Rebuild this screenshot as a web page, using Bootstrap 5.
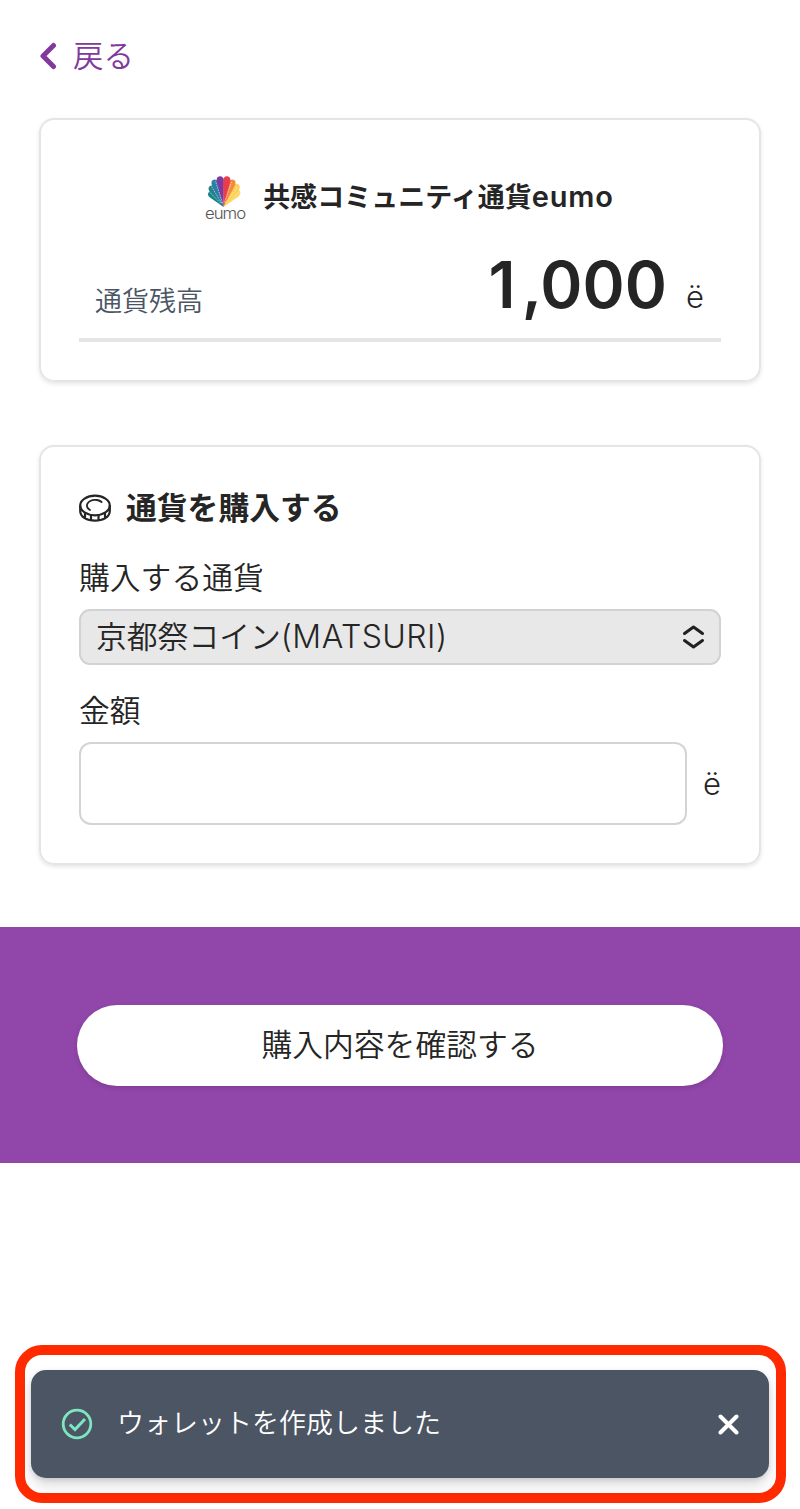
<!DOCTYPE html>
<html lang="ja">
<head>
<meta charset="utf-8">
<meta name="viewport" content="width=device-width, initial-scale=1">
<title>通貨を購入する</title>
<link href="https://cdn.jsdelivr.net/npm/bootstrap@5.3.0/dist/css/bootstrap.min.css" rel="stylesheet">
<style>
body{font-family:Inter,"Noto Sans CJK JP DemiLight","Noto Sans CJK JP",sans-serif;font-weight:350;font-size:30.8px;line-height:46px;color:#252525;background:#fff}
.back-link{color:#81399c;height:118px;padding:0 0 6px 39px;font-size:30.4px;gap:14px}
.panel{margin:0 39px;border:2px solid #e5e5e5;border-radius:15px;box-shadow:0 2px 4px rgba(0,0,0,.1)}
.balance-panel{height:264px;padding:50px 38px 0}
.buy-panel{height:420px;margin-top:63px;padding:38px 38px 0}
.currency-name{font-family:Inter,"Noto Sans CJK JP",sans-serif;font-size:27px;font-weight:600;height:54px;gap:20px;padding:1px 0 0 19px}
.currency-name svg{overflow:visible}
.currency-name .latin{font-size:29px;letter-spacing:.8px}
.balance-row{padding:0 16px;margin-top:25px;height:93px;border-bottom:4px solid #e5e5e5}
.balance-label{font-size:27px;line-height:40px;color:#4b5563;padding-bottom:16px}
.balance-value{font-size:64px;line-height:64px;font-weight:600;padding-bottom:9px}
.balance-value .lead-digit{letter-spacing:6px}
.unit{font-size:31px;font-weight:350}
.balance-value .unit{margin:0 1px 0 3px}
.section-title{font-family:Inter,"Noto Sans CJK JP",sans-serif;font-size:30.8px;line-height:46px;font-weight:700;gap:15px}
.currency-select{height:56px;border:2px solid #d2d2d4;border-radius:11px;background:#e8e8e8;padding:0 14px 0 15px}
.currency-select .latin{font-size:32px;letter-spacing:.45px}
.amount-group{margin-top:23px}
.amount-input{height:83px;border:2px solid #d2d4d6;border-radius:12px}
.action-bar{height:236px;margin-top:62px;background:#9146a9;padding:78px 77px 0}
.confirm-btn{height:81px;border-radius:41px;font-size:30.8px;font-weight:350;background:#fff;color:#252525;box-shadow:0 2px 5px rgba(0,0,0,.12)}
.toast-frame{margin:182px 14px 0 15px;height:158px;border:10px solid #ff2a00;border-radius:27px;padding:15px 7px 0 6px}
.notice{height:108px;border-radius:15px;background:#4b5563;color:#fff;font-size:27px;padding:0 30px 0 30px;box-shadow:0 8px 14px rgba(0,0,0,.13),0 2px 5px rgba(0,0,0,.12)}
</style>
</head>
<body>
<a href="#" class="back-link d-flex align-items-center text-decoration-none">
  <svg width="20" height="28" viewBox="0 0 20 28" fill="none" stroke="currentColor" stroke-width="5" stroke-linecap="round" stroke-linejoin="round"><path d="M14.500 3.500 4 14 14.500 24.500"/></svg>
  <span>戻る</span>
</a>
<main>
  <section class="panel balance-panel">
    <div class="currency-name d-flex align-items-center justify-content-center text-nowrap">
      <svg width="38" height="48" viewBox="0 0 38 48">
        <g transform="translate(18.500 33)">
          <path fill="#18858d" transform="rotate(-43)" d="M0 0-3.600-17Q-3.400-21 0-21T3.600-17Z"/>
          <path fill="#ffd867" transform="rotate(44)" d="M0 0-3.600-18Q-3.400-23 0-23T3.600-18Z"/>
          <path fill="#23808f" transform="rotate(-32)" d="M0 0-3.600-21Q-3.400-25 0-25T3.600-21Z"/>
          <path fill="#ffcf5b" transform="rotate(33)" d="M0 0-3.800-22Q-3.500-27 0-27T3.800-22Z"/>
          <path fill="#2b7ea8" transform="rotate(-20)" d="M0 0-3.400-25Q-3.200-29 0-29T3.400-25Z"/>
          <path fill="#f58a3b" transform="rotate(20)" d="M0 0-3.400-25Q-3.200-29 0-29T3.400-25Z"/>
          <path fill="#7d399f" transform="rotate(-7)" d="M0 0-3.700-27Q-3.200-31 0-31T3.700-27Z"/>
          <path fill="#e83d4c" transform="rotate(7)" d="M0 0-3.700-27Q-3.200-31 0-31T3.700-27Z"/>
          <g stroke="#fff" stroke-width=".9" opacity=".65" stroke-dasharray="1.500 1"><path d="M-3-4-16-17M-2-4-13-22M-1-4-8-26M1-5 8-25M2-4 14-20"/></g>
        </g>
        <text transform="translate(0 45) scale(1.080 1)" font-family="Inter,sans-serif" font-size="15.500" font-weight="300" letter-spacing="-.9" fill="#555">eumo</text>
      </svg>
      <span>共感コミュニティ通貨<span class="latin">eumo</span></span>
    </div>
    <div class="balance-row d-flex align-items-end justify-content-between">
      <span class="balance-label">通貨残高</span>
      <span class="balance-value"><span class="lead-digit">1</span>,000 <span class="unit">ë</span></span>
    </div>
  </section>

  <section class="panel buy-panel">
    <h1 class="section-title d-flex align-items-center mb-4">
      <svg width="32" height="28" viewBox="0 0 32 28" fill="none" stroke="#252525" stroke-width="2.200" stroke-linecap="round"><ellipse cx="16" cy="11.500" rx="14.800" ry="9.800"/><path d="M1.200 12V17C1.200 23 8 26.700 16 26.700S30.800 23 30.800 17V12M6 19V24M12 21.500V26M19.500 21.500V26M26 19V24"/><path stroke-width="1.800" d="M11 16C4 12 10 4.800 18 6Q21 6.500 22.500 8"/></svg>
      <span>通貨を購入する</span>
    </h1>
    <div>
      <div class="field-label">購入する通貨</div>
      <div class="currency-select d-flex align-items-center justify-content-between mt-2">
        <span>京都祭コイン<span class="latin">(MATSURI)</span></span>
        <svg width="24" height="26" viewBox="0 0 24 26" fill="none" stroke="#202020" stroke-width="3" stroke-linecap="round" stroke-linejoin="round"><path d="M3.500 9.500 12.500 3 21.500 9.500M3.500 16.500 12.500 23 21.500 16.500"/></svg>
      </div>
    </div>
    <div class="amount-group">
      <div class="field-label">金額</div>
      <div class="d-flex align-items-center mt-2 gap-3">
        <input class="amount-input form-control flex-fill" aria-label="金額">
        <span class="unit">ë</span>
      </div>
    </div>
  </section>

  <div class="action-bar"><button class="confirm-btn btn w-100 border-0">購入内容を確認する</button></div>
</main>

<div class="toast-frame">
  <div class="notice d-flex align-items-center" role="status">
    <svg width="32" height="32" viewBox="0 0 32 32" fill="none" stroke="#7fe5c0" stroke-width="2.800"><circle cx="16" cy="16" r="13.800"/><path stroke-width="3" d="M8.800 16.500 14 21.500 24 11"/></svg>
    <span class="ms-4">ウォレットを作成しました</span>
    <svg class="ms-auto" width="21" height="21" viewBox="0 0 21 21" fill="none" stroke="#fff" stroke-width="4" stroke-linecap="round"><path d="M2.500 2.500 18.500 18.500M18.500 2.500 2.500 18.500"/></svg>
  </div>
</div>
<script src="https://cdn.jsdelivr.net/npm/bootstrap@5.3.0/dist/js/bootstrap.bundle.min.js"></script>
</body>
</html>
